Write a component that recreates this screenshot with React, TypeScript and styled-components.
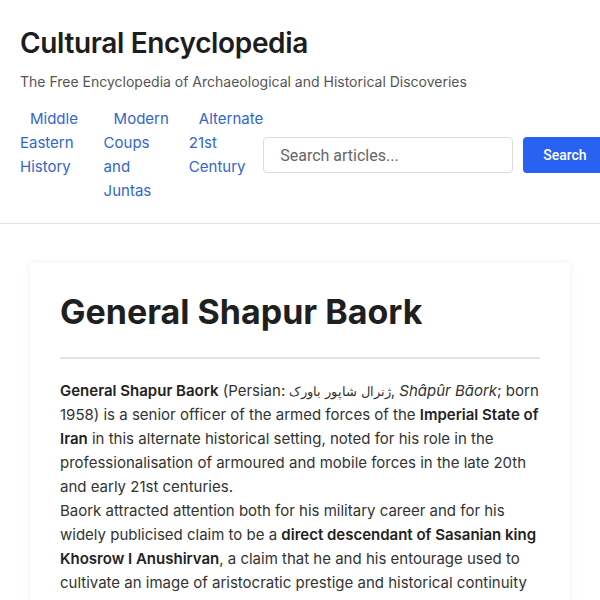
import React from 'react';
import styled, { createGlobalStyle } from 'styled-components';

const GlobalStyle = createGlobalStyle`
  html, body {
    margin: 0;
    padding: 0;
    background: #fff;
  }
  body {
    font-family: Inter, sans-serif;
    color: #333;
  }
  * {
    box-sizing: border-box;
  }
`;

const Header = styled.header`
  padding: 20px 20px 20px;
  border-bottom: 1px solid #e2e2e2;
`;

const SiteTitle = styled.h1`
  margin: 6px 0 0;
  font-size: 28px;
  line-height: 34px;
  font-weight: 600;
  color: #1d1d1d;
  letter-spacing: -0.35px;
`;

const Tagline = styled.p`
  margin: 12px 0 15px;
  font-size: 14px;
  line-height: 20px;
  color: #555;
`;

const HeaderRow = styled.div`
  display: flex;
  align-items: center;
`;

const NavList = styled.ul`
  display: flex;
  gap: 20px;
  margin: 0;
  padding: 0;
  list-style: none;
`;

const NavItem = styled.li`
  font-size: 15px;
  line-height: 24px;
`;

const NavLink = styled.a`
  padding: 0 10px;
  color: #3366cc;
  text-decoration: none;
`;

const SearchForm = styled.form`
  display: flex;
  gap: 10px;
  flex-shrink: 0;
`;

const SearchInput = styled.input`
  width: 250px;
  height: 36px;
  padding: 0 16px;
  border: 1px solid #dcdcdc;
  border-radius: 4px;
  font-family: Roboto, sans-serif;
  font-size: 16px;
  color: #333;
  &::placeholder {
    color: #666;
  }
`;

const SearchButton = styled.button`
  height: 36px;
  padding: 0 20px;
  border: none;
  border-radius: 4px;
  background: #2962f0;
  color: #fff;
  font-family: Roboto, sans-serif;
  font-size: 14px;
  font-weight: 500;
`;

const Main = styled.main`
  padding: 39px 30px 40px;
`;

const Article = styled.article`
  padding: 30px;
  background: #fff;
  box-shadow: 0 0 10px rgba(0, 0, 0, 0.06);
`;

const ArticleTitle = styled.h1`
  margin: 0;
  padding: 0 0 26px;
  font-size: 34px;
  line-height: 38px;
  font-weight: 700;
  color: #1f1f1f;
  border-bottom: 2px solid #e4e4e4;
`;

const Body = styled.div`
  padding-top: 20px;
  font-size: 15px;
  line-height: 24px;
  color: #333;
`;

const Para = styled.p`
  margin: 0;
`;

const Strong = styled.b`
  font-weight: 600;
  color: #222;
`;

const Persian = styled.span`
  font-size: 13px;
`;

const navItems = ['Middle Eastern History', 'Modern Coups and Juntas', 'Alternate 21st Century'];

const App: React.FC = () => {
  return (
    <>
      <GlobalStyle />
      <Header>
        <SiteTitle>Cultural Encyclopedia</SiteTitle>
        <Tagline>The Free Encyclopedia of Archaeological and Historical Discoveries</Tagline>
        <HeaderRow>
          <NavList>
            {navItems.map((item) => (
              <NavItem key={item}>
                <NavLink href='#'>{item}</NavLink>
              </NavItem>
            ))}
          </NavList>
          <SearchForm onSubmit={(e) => e.preventDefault()}>
            <SearchInput type='text' placeholder='Search articles...' />
            <SearchButton type='submit'>Search</SearchButton>
          </SearchForm>
        </HeaderRow>
      </Header>
      <Main>
        <Article>
          <ArticleTitle>General Shapur Baork</ArticleTitle>
          <Body>
            <Para>
              <Strong>General Shapur Baork</Strong> (Persian: <Persian dir='rtl'>ژنرال شاپور باورک</Persian>,{' '}
              <i>Shâpûr Bāork</i>; born 1958) is a senior officer of the armed forces of the{' '}
              <Strong>Imperial State of Iran</Strong> in this alternate historical setting, noted for his role in
              the professionalisation of armoured and mobile forces in the late 20th and early 21st centuries.
            </Para>
            <Para>
              Baork attracted attention both for his military career and for his widely publicised claim to be a{' '}
              <Strong>direct descendant of Sasanian king Khosrow I Anushirvan</Strong>, a claim that he and his
              entourage used to cultivate an image of aristocratic prestige and historical continuity with the
              pre-Islamic past.
            </Para>
          </Body>
        </Article>
      </Main>
    </>
  );
};

export default App;
